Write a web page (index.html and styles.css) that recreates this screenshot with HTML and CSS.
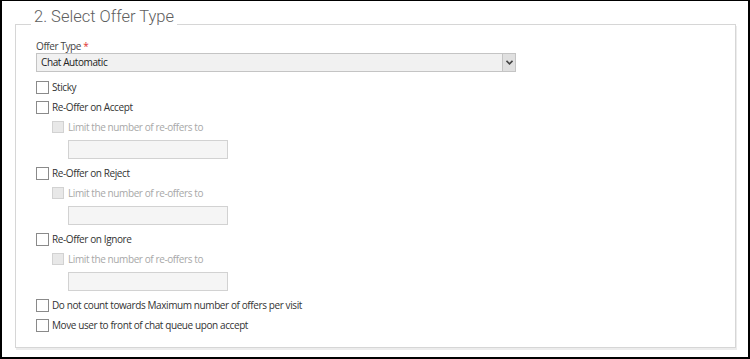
FILE: index.html
```html
<!DOCTYPE HTML>
<html>
	<head>
		<meta charset="utf-8">
		<title>Select Offer Type</title>
		<link rel="stylesheet" href="styles.css">
	</head>
	<body>
		<div class="frame">
			<div class="panel">
				<h2 class="panel-title">2. Select Offer Type</h2>

				<label class="field-label">Offer Type <span class="req">*</span></label>
				<div class="select">
					<span class="select-value">Chat Automatic</span>
					<span class="select-arrow">
						<svg width="7" height="5" viewBox="0 0 7 5"><path d="M0.5 0.8 L3.5 3.8 L6.5 0.8" fill="none" stroke="#444" stroke-width="1.6"/></svg>
					</span>
				</div>

				<div class="check"><span class="box"></span>Sticky</div>

				<div class="check"><span class="box"></span>Re-Offer on Accept</div>
				<div class="check sub disabled"><span class="box"></span>Limit the number of re-offers to</div>
				<div class="text-input"></div>

				<div class="check"><span class="box"></span>Re-Offer on Reject</div>
				<div class="check sub disabled"><span class="box"></span>Limit the number of re-offers to</div>
				<div class="text-input"></div>

				<div class="check"><span class="box"></span>Re-Offer on Ignore</div>
				<div class="check sub disabled"><span class="box"></span>Limit the number of re-offers to</div>
				<div class="text-input"></div>

				<div class="check"><span class="box"></span>Do not count towards Maximum number of offers per visit</div>
				<div class="check"><span class="box"></span>Move user to front of chat queue upon accept</div>
			</div>
		</div>
	</body>
</html>
```

FILE: styles.css
```css
*{
	box-sizing: border-box;
}
html, body{
	margin: 0;
	padding: 0;
	background: #fff;
}
.frame{
	width: 750px;
	height: 359px;
	border-style: solid;
	border-color: #000;
	border-width: 1px 2px 2px 2px;
	padding: 23px 12px 0 13px;
	font-family: "Open Sans", "Noto Sans", sans-serif;
	font-size: 10px;
	letter-spacing: -0.4px;
	color: #333;
}
.panel{
	border: 1px solid #d6d6d6;
	box-shadow: 1px 2px 0 #ececec;
	height: 324px;
	padding: 0 0 0 20px;
}
.panel-title{
	display: block;
	width: fit-content;
	margin: -18px 0 0 -5px;
	padding: 0 3px;
	background: #fff;
	font-family: Roboto, "Open Sans", sans-serif;
	font-weight: 300;
	font-size: 16.5px;
	letter-spacing: 0;
	line-height: 20px;
	color: #5e5e5e;
}
.field-label{
	display: block;
	margin-top: 12px;
	line-height: 14px;
	color: #444;
}
.req{
	color: #e03030;
}
.select{
	display: flex;
	width: 480px;
	height: 19px;
	border: 1px solid #c4c4c4;
	background: #f1f1f1;
}
.select-value{
	flex: 1;
	padding-left: 4px;
	line-height: 17px;
	color: #222;
}
.select-arrow{
	width: 13px;
	display: flex;
	align-items: center;
	justify-content: center;
	background: #e0e0e0;
	border-left: 1px solid #c4c4c4;
}
.check{
	display: flex;
	align-items: center;
	height: 20px;
	line-height: 20px;
}
.select + .check{
	margin-top: 5px;
}
.box{
	width: 13px;
	height: 13px;
	border: 1px solid #8a8a8a;
	background: #fff;
	margin-right: 3px;
}
.check.sub{
	padding-left: 16px;
}
.check.disabled{
	color: #a8a8a8;
}
.check.disabled .box{
	width: 12px;
	height: 12px;
	border-color: #d2d2d2;
	background: #e8e8e8;
	margin-right: 4px;
}
.text-input{
	width: 160px;
	height: 19px;
	margin: 3px 0 4px 32px;
	border: 1px solid #d2d2d2;
	background: #f5f5f5;
}
```
